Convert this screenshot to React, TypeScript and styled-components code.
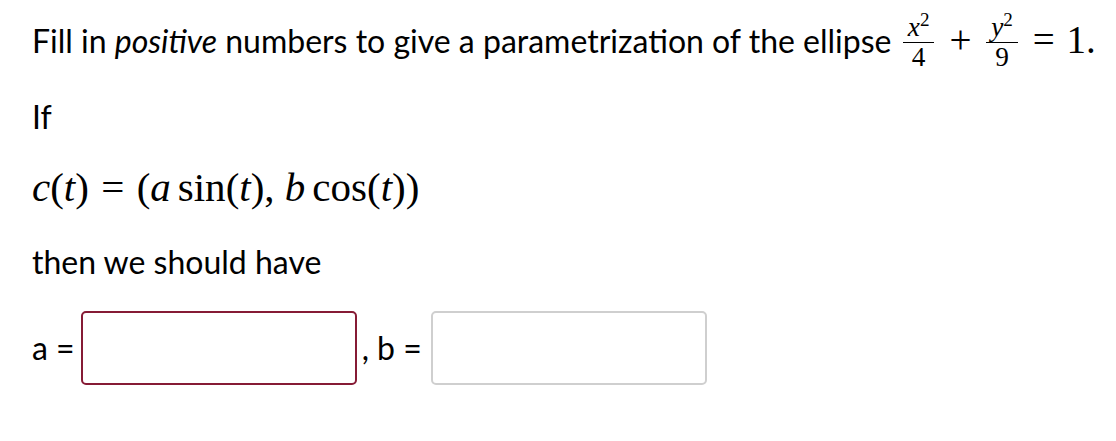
import styled, { createGlobalStyle } from "styled-components";

const Global = createGlobalStyle`
  html, body {
    margin: 0;
    padding: 0;
    background: #fff;
  }
  body {
    font-family: Lato, "Noto Sans", sans-serif;
    color: #000;
  }
`;

// ─── Page ─────────────────────────────────────────────────────
const Page = styled.div`
  padding: 20px 32px 0;
  font-size: 32px;
  line-height: 40px;
`;

const Para = styled.p<{ $mt?: number }>`
  margin: ${({ $mt }) => $mt ?? 0}px 0 0;
  height: 40px;
  white-space: nowrap;
`;

// ─── Math bits ────────────────────────────────────────────────
const MathText = styled.span<{ $size?: number }>`
  font-family: "Liberation Serif", "DejaVu Serif", serif;
  font-size: ${({ $size }) => $size ?? 39}px;
  line-height: 1;
  white-space: nowrap;
`;

const V = styled.i`
  font-style: italic;
`;

const Op = styled.span`
  margin: 0 0.3em;
`;

const Fn = styled.span`
  margin-left: 0.17em;
`;

const Frac = styled.span`
  display: inline-flex;
  flex-direction: column;
  align-items: stretch;
  text-align: center;
  vertical-align: middle;
  font-size: 0.7em;
  line-height: 1.05;
  margin: -14px 0.12em;
  position: relative;
  top: -2px;
`;

const Num = styled.span`
  padding: 0 0.18em;
  border-bottom: 1.5px solid #000;
`;

const Den = styled.span``;

const Sup = styled.sup`
  font-size: 0.7em;
  line-height: 0;
`;

// ─── Answer row ───────────────────────────────────────────────
const AnswerRow = styled.div`
  display: flex;
  align-items: center;
  margin-top: 29px;
  font-size: 32px;
  line-height: 40px;
`;

const Label = styled.span`
  margin-right: 6px;
`;

const Sep = styled.span`
  margin: 0 9px 0 5px;
`;

const Box = styled.div<{ $active?: boolean }>`
  width: 276px;
  height: 74px;
  flex-shrink: 0;
  box-sizing: border-box;
  border: 2px solid ${({ $active }) => ($active ? "#861b35" : "#cfcfcf")};
  border-radius: 5px;
  background: #fff;
`;

export default function App() {
  return (
    <>
      <Global />
      <Page>
        <Para>
          Fill in <em>positive</em> numbers to give a parametrization of the ellipse{" "}
          <MathText>
            <Frac>
              <Num>
                <V>x</V>
                <Sup>2</Sup>
              </Num>
              <Den>4</Den>
            </Frac>
            <Op>+</Op>
            <Frac>
              <Num>
                <V>y</V>
                <Sup>2</Sup>
              </Num>
              <Den>9</Den>
            </Frac>
            <Op>=</Op>1.
          </MathText>
        </Para>

        <Para $mt={37}>If</Para>

        <Para $mt={30}>
          <MathText $size={41}>
            <V>c</V>(<V>t</V>)<Op>=</Op>(<V>a</V>
            <Fn>sin</Fn>(<V>t</V>), <V>b</V>
            <Fn>cos</Fn>(<V>t</V>))
          </MathText>
        </Para>

        <Para $mt={35}>then we should have</Para>

        <AnswerRow>
          <Label>a =</Label>
          <Box $active />
          <Sep>, b =</Sep>
          <Box />
        </AnswerRow>
      </Page>
    </>
  );
}
